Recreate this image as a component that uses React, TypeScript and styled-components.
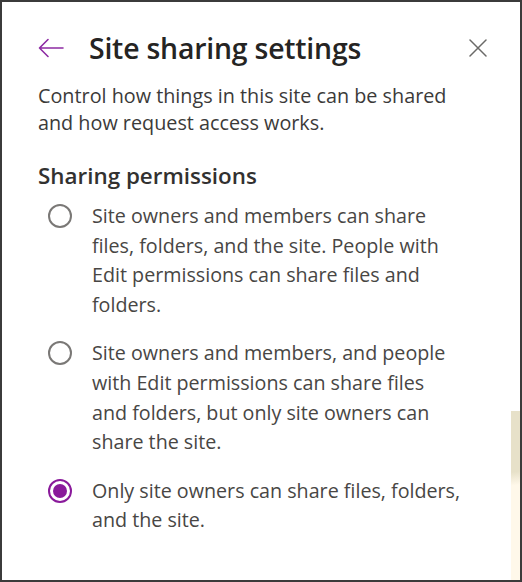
import React from "react";
import styled, { createGlobalStyle } from "styled-components";

const GlobalStyle = createGlobalStyle`
  html, body {
    margin: 0;
    padding: 0;
    background: #ffffff;
  }
  body {
    font-family: "Open Sans", "Noto Sans", sans-serif;
  }
`;

const Frame = styled.div`
  box-sizing: border-box;
  width: 522px;
  height: 582px;
  border: 2px solid #3b3b3b;
  display: flex;
  background: #ffffff;
  overflow: hidden;
`;

const Panel = styled.div`
  flex: 1;
  display: flex;
  flex-direction: column;
  padding: 28px 0 0 35px;
`;

const Header = styled.div`
  display: flex;
  align-items: center;
  height: 36px;
`;

const IconButton = styled.button`
  border: none;
  background: transparent;
  padding: 0;
  display: flex;
  align-items: center;
  justify-content: center;
  cursor: pointer;
`;

const Title = styled.h1`
  margin: 0 0 0 25px;
  flex: 1;
  font-size: 28.4px;
  font-weight: 600;
  color: #252423;
  letter-spacing: -0.2px;
`;

const CloseButton = styled(IconButton)`
  margin-right: 24px;
`;

const Description = styled.p`
  margin: 16px 0 0 1px;
  font-size: 19.8px;
  line-height: 27px;
  color: #3b3a39;
  width: 420px;
`;

const SectionTitle = styled.h2`
  margin: 24px 0 0 1px;
  font-size: 22.4px;
  font-weight: 600;
  color: #323130;
`;

const Options = styled.div`
  display: flex;
  flex-direction: column;
  gap: 18.5px;
  margin-top: 10px;
  padding-left: 11px;
`;

const Option = styled.label`
  display: flex;
  align-items: flex-start;
  gap: 20px;
  cursor: pointer;
`;

const Radio = styled.span<{ $checked?: boolean }>`
  box-sizing: border-box;
  flex: none;
  width: 24px;
  height: 24px;
  margin-top: 3px;
  border-radius: 50%;
  border: 2px solid ${(p) => (p.$checked ? "#8a1a9b" : "#7a7876")};
  display: flex;
  align-items: center;
  justify-content: center;

  &::after {
    content: "";
    width: 14px;
    height: 14px;
    border-radius: 50%;
    background: #8a1a9b;
    display: ${(p) => (p.$checked ? "block" : "none")};
  }
`;

const OptionText = styled.span`
  font-size: 19.7px;
  line-height: 29.7px;
  color: #484644;
  width: 371px;
`;

const Side = styled.div`
  width: 9px;
  display: flex;
  flex-direction: column;
  padding-top: 409px;
`;

const Strip = styled.div`
  flex: 1;
  background: linear-gradient(172deg, #e7e1c9 0%, #e7e1c9 36%, #fff8ea 44%, #fff8ea 100%);
`;

const options = [
  "Site owners and members can share files, folders, and the site. People with Edit permissions can share files and folders.",
  "Site owners and members, and people with Edit permissions can share files and folders, but only site owners can share the site.",
  "Only site owners can share files, folders, and the site.",
];

export default function App() {
  const selected = 2;
  return (
    <>
      <GlobalStyle />
      <Frame>
        <Panel>
          <Header>
            <IconButton aria-label="Back">
              <svg width="27" height="20" viewBox="0 0 27 20" fill="none">
                <path d="M11 1.5 L2.5 10 L11 18.5 M2.5 10 H26" stroke="#8d2ba3" strokeWidth="1.6" strokeLinecap="round" strokeLinejoin="round" />
              </svg>
            </IconButton>
            <Title>Site sharing settings</Title>
            <CloseButton aria-label="Close">
              <svg width="18" height="18" viewBox="0 0 18 18" fill="none">
                <path d="M1 1 L17 17 M17 1 L1 17" stroke="#6b6a68" strokeWidth="1.5" strokeLinecap="round" />
              </svg>
            </CloseButton>
          </Header>
          <Description>
            Control how things in this site can be shared and how request access works.
          </Description>
          <SectionTitle>Sharing permissions</SectionTitle>
          <Options>
            {options.map((text, i) => (
              <Option key={i}>
                <Radio $checked={i === selected} />
                <OptionText>{text}</OptionText>
              </Option>
            ))}
          </Options>
        </Panel>
        <Side>
          <Strip />
        </Side>
      </Frame>
    </>
  );
}
